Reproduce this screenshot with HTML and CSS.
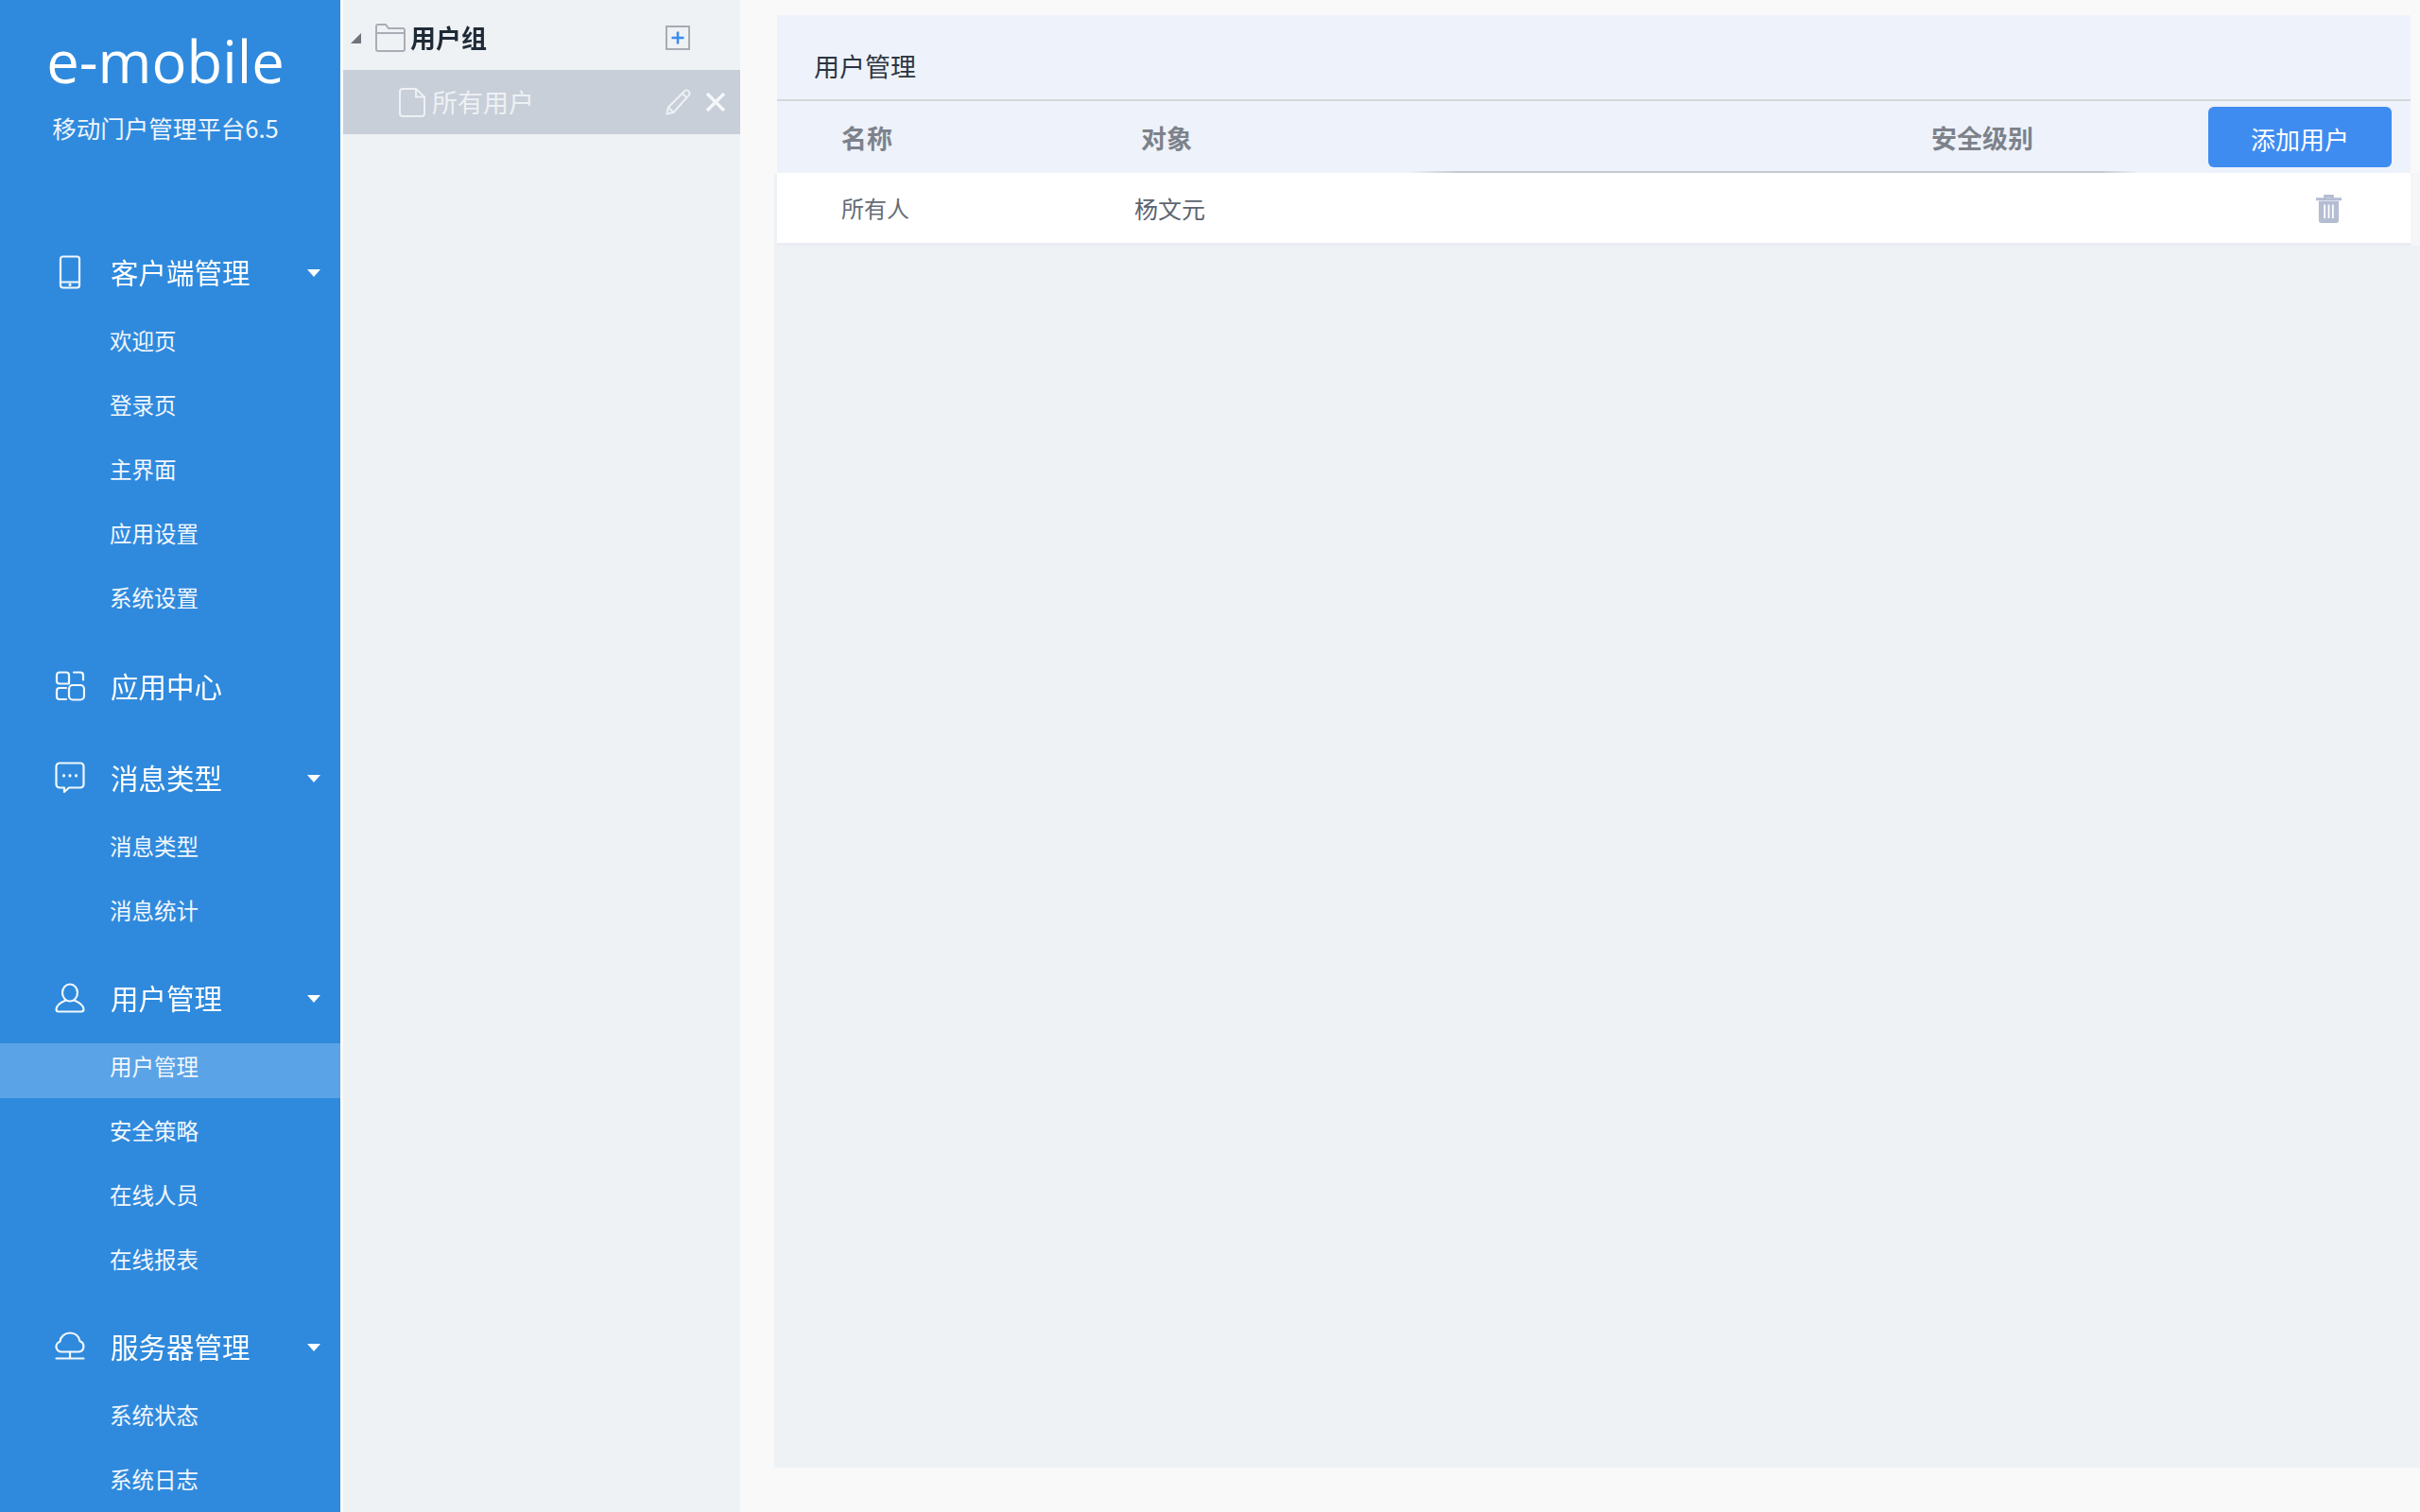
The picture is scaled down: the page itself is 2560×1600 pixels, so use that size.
FILE: index.html
```html
<!DOCTYPE html>
<html lang="zh-CN">
<head>
    <meta charset="UTF-8">
    <title>e-mobile 用户管理</title>
    <link rel="stylesheet" href="styles.css">
</head>
<body>
    <div class="app">
        <aside class="sidebar">
            <div class="brand">
                <div class="logo">e-mobile</div>
                <div class="subtitle">移动门户管理平台6.5</div>
            </div>
            <nav class="nav">
                <section class="group">
                    <div class="group-head">
                        <svg class="group-icon" viewBox="0 0 32 36"><rect x="6" y="1.5" width="20" height="33" rx="2.5"/><path d="M6 28.5h20"/><path class="dot" d="M16 31v.6"/></svg>
                        <span class="group-name">客户端管理</span>
                        <i class="caret"></i>
                    </div>
                    <ul class="sub-list">
                        <li class="sub-item"><span>欢迎页</span></li>
                        <li class="sub-item"><span>登录页</span></li>
                        <li class="sub-item"><span>主界面</span></li>
                        <li class="sub-item"><span>应用设置</span></li>
                        <li class="sub-item"><span>系统设置</span></li>
                    </ul>
                </section>
                <section class="group">
                    <div class="group-head">
                        <svg class="group-icon" viewBox="0 0 32 32"><path d="M5 1.5h7a3 3 0 0 1 3 3v9H5a3 3 0 0 1-3-3v-6a3 3 0 0 1 3-3z"/><path d="M20 1.5h7a3 3 0 0 1 3 3v5"/><rect x="15" y="15" width="16" height="15.5" rx="4"/><path d="M12 18H5a3 3 0 0 0-3 3v6a3 3 0 0 0 3 3h7"/></svg>
                        <span class="group-name">应用中心</span>
                    </div>
                </section>
                <section class="group">
                    <div class="group-head">
                        <svg class="group-icon" viewBox="0 0 32 34"><path d="M5 1.5h22a3.500 3.500 0 0 1 3.500 3.500v19a3.500 3.500 0 0 1-3.500 3.500H15l-5 4.500v-4.500H5A3.500 3.500 0 0 1 1.500 24V5A3.500 3.500 0 0 1 5 1.500z"/><path class="dot" d="M9.500 14.500v.6M16 14.500v.6M22.500 14.500v.6"/></svg>
                        <span class="group-name">消息类型</span>
                        <i class="caret"></i>
                    </div>
                    <ul class="sub-list">
                        <li class="sub-item"><span>消息类型</span></li>
                        <li class="sub-item"><span>消息统计</span></li>
                    </ul>
                </section>
                <section class="group">
                    <div class="group-head">
                        <svg class="group-icon" viewBox="0 0 32 32"><ellipse cx="16" cy="10.500" rx="8" ry="9"/><path d="M11.500 18.500C7 20.500 1.500 24 1.500 28c0 1.500 1 2.500 2.500 2.500h24c1.500 0 2.500-1 2.500-2.500 0-4-5.500-7.500-10-9.500"/></svg>
                        <span class="group-name">用户管理</span>
                        <i class="caret"></i>
                    </div>
                    <ul class="sub-list">
                        <li class="sub-item active"><span>用户管理</span></li>
                        <li class="sub-item"><span>安全策略</span></li>
                        <li class="sub-item"><span>在线人员</span></li>
                        <li class="sub-item"><span>在线报表</span></li>
                    </ul>
                </section>
                <section class="group">
                    <div class="group-head">
                        <svg class="group-icon" viewBox="0 0 32 32"><path d="M8 21.500H7a5.500 5.500 0 0 1-1.500-10.800C6 5.500 10.500 1.500 16 1.500s9.500 3.500 10.500 8.800A5.800 5.800 0 0 1 25.500 21.500z"/><path d="M16 21.500v7M1.500 28.500h29"/></svg>
                        <span class="group-name">服务器管理</span>
                        <i class="caret"></i>
                    </div>
                    <ul class="sub-list">
                        <li class="sub-item"><span>系统状态</span></li>
                        <li class="sub-item"><span>系统日志</span></li>
                    </ul>
                </section>
            </nav>
        </aside>

        <div class="tree">
            <div class="tree-root">
                <i class="tree-arrow"></i>
                <svg class="folder-icon" viewBox="0 0 32 30"><path d="M3 1h8l3 4h15a2 2 0 0 1 2 2v20a2 2 0 0 1-2 2H3a2 2 0 0 1-2-2V3a2 2 0 0 1 2-2z"/><path d="M1 10h30"/></svg>
                <span class="tree-root-name">用户组</span>
                <svg class="add-icon" viewBox="0 0 26 26"><rect class="add-box" x="1" y="1" width="24" height="24"/><path class="add-plus" d="M13 6.500v13M6.500 13h13"/></svg>
            </div>
            <div class="tree-node">
                <svg class="doc-icon" viewBox="0 0 28 31"><path d="M4 1h14l9 8.500V27a3 3 0 0 1-3 3H4a3 3 0 0 1-3-3V4a3 3 0 0 1 3-3z"/><path d="M18 1v8.500h9"/></svg>
                <span class="tree-node-name">所有用户</span>
                <svg class="edit-icon" viewBox="0 0 28 28"><path d="M3 19.500 19.500 3a3 3 0 0 1 5.500 3.500L8.500 25 1.500 26.500z"/><path d="M18 5l5 5M3 19.500l5.500 5.500"/></svg>
                <svg class="close-icon" viewBox="0 0 22 20"><path d="M2 1l18 18M20 1 2 19"/></svg>
            </div>
        </div>

        <main class="main">
            <div class="panel-head">
                <h2 class="panel-title">用户管理</h2>
                <div class="table-head">
                    <div class="th th-name">名称</div>
                    <div class="th">对象</div>
                    <div class="th th-wide"></div>
                    <div class="th">安全级别</div>
                    <button class="btn-add">添加用户</button>
                </div>
            </div>
            <div class="panel-body">
                <div class="table-row">
                    <div class="td td-name">所有人</div>
                    <div class="td td-target">杨文元</div>
                    <div class="td"></div>
                    <div class="td"></div>
                    <div class="td td-action">
                        <svg class="trash-icon" viewBox="0 0 30 33"><path class="trash-lid" d="M1 7h28M11 6.500V3.500h8v3"/><path class="trash-can" d="M4 9h22v21a3 3 0 0 1-3 3H7a3 3 0 0 1-3-3z"/><path class="trash-bars" d="M10.500 13v15M15 13v15M19.500 13v15"/></svg>
                    </div>
                </div>
            </div>
        </main>
    </div>
</body>
</html>
```

FILE: styles.css
```css
* {
    box-sizing: border-box;
}
html, body {
    margin: 0;
    padding: 0;
    height: 100%;
}
body {
    font-family: "Liberation Sans", "Noto Sans CJK SC", sans-serif;
    background-color: #f9f9f9;
    overflow: hidden;
}
.app {
    display: flex;
    height: 1600px;
    filter: blur(0.5px);
}

/* left menu */
.sidebar {
    width: 360px;
    flex-shrink: 0;
    background-color: #2f8add;
    color: #fff;
    overflow: hidden;
}
.brand {
    height: 250px;
    padding-top: 25px;
    text-align: center;
    width: 350px;
}
.logo {
    font-family: "Open Sans", sans-serif;
    font-weight: 400;
    font-size: 61.5px;
    line-height: 78px;
}
.subtitle {
    font-family: "Noto Sans CJK SC", sans-serif;
    font-size: 25.5px;
    line-height: 40px;
    margin-top: 12px;
    color: #eef5fc;
}
.group {
    margin-bottom: 21px;
}
.group:first-child {
    margin-bottom: 22px;
}
.group-head {
    display: flex;
    align-items: center;
    height: 76px;
    padding-left: 58px;
    position: relative;
}
.group-icon {
    width: 32px;
    height: 36px;
    fill: none;
    stroke: #f3f8fd;
    stroke-width: 2.2;
    stroke-linejoin: round;
    stroke-linecap: round;
}
.group-icon .dot {
    stroke-width: 3;
}
.group-name {
    font-family: "Noto Sans CJK SC", sans-serif;
    font-size: 29.5px;
    line-height: 40px;
    margin-left: 27px;
    margin-bottom: 2px;
}
.caret {
    position: absolute;
    left: 325px;
    top: 35px;
    border-top: 8px solid #fff;
    border-left: 7px solid transparent;
    border-right: 7px solid transparent;
}
.sub-list {
    list-style: none;
    margin: 0;
    padding: 0;
}
.sub-item {
    height: 58px;
    margin-top: 10px;
    padding-left: 116px;
    font-family: "Noto Sans CJK SC", sans-serif;
    font-size: 23.5px;
    line-height: 48px;
    color: #f2f7fd;
}
.sub-item.active {
    background-color: #5aa3e6;
}

/* tree */
.tree {
    width: 420px;
    flex-shrink: 0;
    margin-left: 3px;
    background-color: #eff2f5;
    font-family: "Noto Sans CJK SC", sans-serif;
}
.tree-root {
    display: flex;
    align-items: center;
    height: 74px;
    padding: 6px 0 0 8px;
    position: relative;
}
.tree-arrow {
    width: 0;
    height: 0;
    border-bottom: 11px solid #6f747c;
    border-left: 11px solid transparent;
}
.folder-icon {
    width: 32px;
    height: 30px;
    margin-left: 15px;
    fill: none;
    stroke: #a9adb5;
    stroke-width: 2;
}
.tree-root-name {
    font-size: 27px;
    font-weight: 700;
    line-height: 40px;
    margin-left: 5px;
    color: #1f2a37;
}
.add-icon {
    width: 26px;
    height: 26px;
    margin-left: 189px;
}
.add-box {
    fill: none;
    stroke: #a7abb3;
    stroke-width: 2;
}
.add-plus {
    fill: none;
    stroke: #3a8cf0;
    stroke-width: 2.5;
}
.tree-node {
    display: flex;
    align-items: center;
    height: 68px;
    padding-left: 59px;
    background-color: #c8cfd9;
    color: #eef1f4;
}
.doc-icon {
    width: 28px;
    height: 31px;
    fill: none;
    stroke: #eef1f4;
    stroke-width: 2;
}
.tree-node-name {
    font-size: 27px;
    line-height: 40px;
    margin-left: 7px;
}
.edit-icon {
    width: 28px;
    height: 28px;
    margin-left: 139px;
    fill: none;
    stroke: #eef1f4;
    stroke-width: 2;
}
.close-icon {
    width: 22px;
    height: 20px;
    margin-left: 14px;
    fill: none;
    stroke: #f5f7f9;
    stroke-width: 3.5;
}

/* main panel */
.main {
    flex: 1;
    padding-top: 16px;
    display: flex;
    flex-direction: column;
}
.panel-head {
    margin: 0 10px 0 39px;
    background-color: #eef2fa;
}
.panel-title {
    margin: 0;
    height: 91px;
    padding: 34px 0 0 39px;
    border-bottom: 2px solid #d4d7da;
    font-family: "Noto Sans CJK SC", sans-serif;
    font-size: 27px;
    font-weight: 400;
    line-height: 40px;
    color: #2c3542;
}
.table-head, .table-row {
    display: grid;
    grid-template-columns: 385px 300px 536px 293px 194px;
    align-items: center;
}
.table-head {
    height: 76px;
    background-image: linear-gradient(to right, transparent 668px, #c6c9cd 720px, #c6c9cd 1400px, transparent 1440px);
    background-size: 100% 2px;
    background-position: 0 100%;
    background-repeat: no-repeat;
}
.th {
    padding-top: 1px;
    font-family: "Noto Sans CJK SC", sans-serif;
    font-size: 27px;
    font-weight: 700;
    line-height: 40px;
    color: #7d828b;
}
.th-name, .td-name {
    padding-left: 68px;
}
.btn-add {
    height: 64px;
    width: 194px;
    padding: 3px 0 0;
    border: 0;
    border-radius: 6px;
    background-color: #3f8cf1;
    color: #fff;
    font-family: "Noto Sans CJK SC", sans-serif;
    font-size: 26px;
}
.panel-body {
    flex: 1;
    margin: 0 0 47px 36px;
    background-color: #eef2f5;
}
.table-row {
    height: 77px;
    margin: 0 10px 0 3px;
    background-color: #fff;
    border-bottom: 3px solid #e9ecf2;
    box-shadow: 10px 0 0 #f5f6f8;
}
.td {
    font-family: "Noto Sans CJK SC", sans-serif;
    line-height: 40px;
    color: #666c75;
}
.td-name {
    font-size: 24px;
}
.td-target {
    margin-left: -7px;
    font-size: 25px;
    color: #5c6470;
}
.td-action {
    display: flex;
    align-items: center;
    padding-left: 113px;
}
.trash-icon {
    width: 29px;
    height: 32px;
}
.trash-lid {
    fill: none;
    stroke: #b4bdd2;
    stroke-width: 3;
}
.trash-can {
    fill: #b4bdd2;
}
.trash-bars {
    fill: none;
    stroke: #fff;
    stroke-width: 1.8;
}
```
